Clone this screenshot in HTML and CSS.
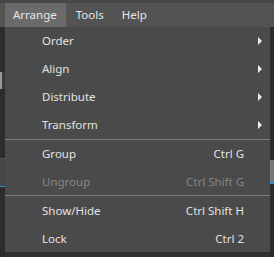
FILE: index.html
```html
<!DOCTYPE html>
<html>
<head>
<meta charset="utf-8">
<link rel="stylesheet" href="styles.css">
</head>
<body>
<div class="app">
  <div class="menubar">
    <div class="mb-item active">Arrange</div>
    <div class="mb-item">Tools</div>
    <div class="mb-item">Help</div>
  </div>
  <div class="under">
    <div class="left-strip">
      <div class="ls-a"></div>
      <div class="ls-b"></div>
      <div class="ls-c"></div>
      <div class="ls-d"></div>
    </div>
    <div class="menu">
      <div class="mi"><span class="label">Order</span><span class="arrow"></span></div>
      <div class="mi"><span class="label">Align</span><span class="arrow"></span></div>
      <div class="mi"><span class="label">Distribute</span><span class="arrow"></span></div>
      <div class="mi"><span class="label">Transform</span><span class="arrow"></span></div>
      <div class="sep"></div>
      <div class="mi"><span class="label">Group</span><span class="key">Ctrl G</span></div>
      <div class="mi disabled"><span class="label">Ungroup</span><span class="key">Ctrl Shift G</span></div>
      <div class="sep"></div>
      <div class="mi"><span class="label">Show/Hide</span><span class="key">Ctrl Shift H</span></div>
      <div class="mi"><span class="label">Lock</span><span class="key">Ctrl 2</span></div>
    </div>
    <div class="right-strip">
      <div class="rs-a"></div>
      <div class="rs-b"></div>
    </div>
  </div>
</div>
</body>
</html>
```

FILE: styles.css
```css
* { box-sizing: border-box; }
html, body { margin: 0; padding: 0; }
body {
  background: #2f2f2f;
  font-family: "Noto Sans", "Open Sans", sans-serif;
  font-size: 11.5px;
  width: 274px;
  height: 257px;
  overflow: hidden;
}
.app { display: flex; flex-direction: column; height: 257px; }
.menubar {
  display: flex;
  height: 27px;
  padding: 3px 0 0 5px;
  background: linear-gradient(#474747 0 3px, #535353 3px);
  color: #e6e6e6;
}
.mb-item {
  height: 24px;
  line-height: 24px;
  padding: 0 8px;
  margin-right: 2px;
}
.mb-item.active { background: #6a6a6a; padding: 0 9px 0 8px; }
.under { display: flex; flex: 1; }
.left-strip {
  width: 5px;
  background: #2c2c2c;
  display: flex;
  flex-direction: column;
}
.ls-a { height: 45px; }
.ls-b { height: 17px; border-left: 2px solid #9a9a9a; background: #3a3a3a; }
.ls-c { height: 70px; border-bottom: 1px solid #555; }
.ls-d { height: 28px; background: #454545; border-bottom: 1px solid #2a8fd0; margin-bottom: 24px; }
.menu {
  width: 265px;
  height: 225px;
  background: #4a4a4a;
  color: #e2e2e2;
  display: flex;
  flex-direction: column;
}
.mi {
  height: 28px;
  display: flex;
  align-items: center;
  padding: 0 8px 0 37px;
}
.label { flex: 1; }
.key { margin-right: 18px; }
.disabled { color: #878787; }
.arrow {
  width: 0; height: 0;
  border-top: 4px solid transparent;
  border-bottom: 4px solid transparent;
  border-left: 4px solid #eeeeee;
}
.sep { height: 1px; background: #7b7b7b; }
.right-strip {
  width: 4px;
  background: #2b2b2b;
  display: flex;
  flex-direction: column;
}
.rs-a { height: 133px; }
.rs-b { height: 24px; background: #777; border-bottom: 2px solid #2a8fd0; }
```
